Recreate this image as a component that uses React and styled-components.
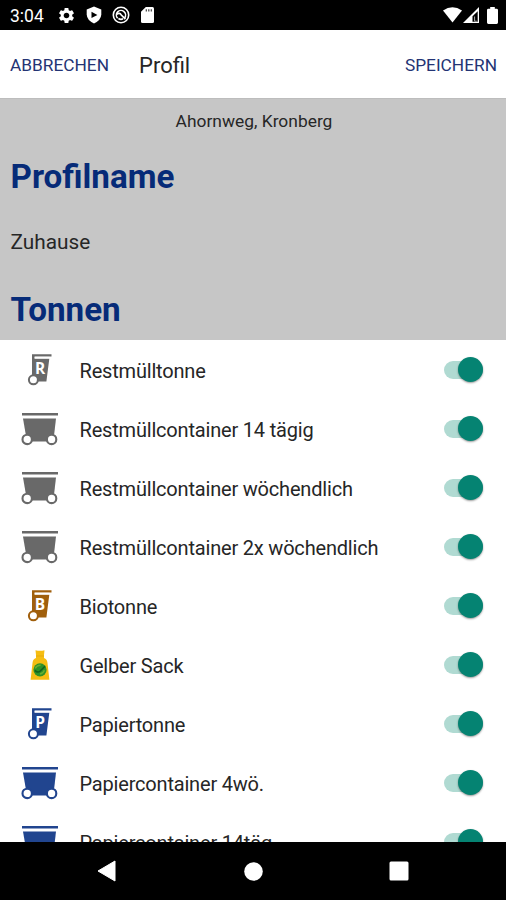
import React, { useState } from 'react';
import styled, { createGlobalStyle } from 'styled-components';
import { MdSettings } from 'react-icons/md';

const GREY = '#696969'
const BROWN = '#a05f0c'
const BLUE = '#21458f'

const BINS = [
  {name: 'Restmülltonne', kind: 'bin', letter: 'R', color: GREY},
  {name: 'Restmüllcontainer 14 tägig', kind: 'container', color: GREY},
  {name: 'Restmüllcontainer wöchendlich', kind: 'container', color: GREY},
  {name: 'Restmüllcontainer 2x wöchendlich', kind: 'container', color: GREY},
  {name: 'Biotonne', kind: 'bin', letter: 'B', color: BROWN},
  {name: 'Gelber Sack', kind: 'sack'},
  {name: 'Papiertonne', kind: 'bin', letter: 'P', color: BLUE},
  {name: 'Papiercontainer 4wö.', kind: 'container', color: BLUE},
  {name: 'Papiercontainer 14täg.', kind: 'container', color: BLUE},
]

const Bin = ({color, letter}) => (
  <svg width="26" height="34" viewBox="0 0 26 34">
    <path d="M5 1.2H24.5V3.4H7.6V5.8H22.3L19.4 28.4H5Z" fill={color} />
    <path d="M7.6 4.6H22.6" stroke="#fff" strokeWidth="1.6" opacity=".75" />
    <text x="13" y="20.8" textAnchor="middle" fontFamily="'Open Sans', sans-serif" fontWeight="700" fontSize="15.5" fill="#fff">{letter}</text>
    <circle cx="6.4" cy="26.8" r="4.5" fill="#fff" stroke={color} strokeWidth="2" />
  </svg>
)

const Container = ({color}) => (
  <svg width="38" height="34" viewBox="0 0 38 34">
    <path d="M1 2.2H37" stroke={color} strokeWidth="2.4" />
    <path d="M2 6.5H35L32.8 25.5L31 29.5H7L5.2 25Z" fill={color} />
    <circle cx="6.2" cy="27.4" r="4.7" fill="#fff" stroke={color} strokeWidth="2.1" />
    <circle cx="30.6" cy="27.4" r="4.7" fill="#fff" stroke={color} strokeWidth="2.1" />
  </svg>
)

const Sack = () => (
  <svg width="20" height="32" viewBox="0 0 20 32">
    <path d="M5.5 1.2Q10 2.2 14.5 1.2L14 6V9Q17.2 10 17.5 14L19.4 30.7H.6L2.5 14Q2.8 10 6 9V6Z" fill="#f6bd12" />
    <path d="M6 7H14" stroke="#e5ab0d" strokeWidth="1" />
    <circle cx="10" cy="20.8" r="6.6" fill="#2f9127" />
    <path d="M4.8 21.4Q8.2 24.8 11 21.2L15 17.2" fill="none" stroke="#12601d" strokeWidth="1.6" />
    <path d="M5.2 19.4Q6.8 16 10.6 16.2M10 25Q13.2 24.4 14.4 21.2" fill="none" stroke="#69ae31" strokeWidth="1.4" />
  </svg>
)

const BinIcon = ({kind, color, letter}) => {
  if(kind === 'bin') return <Bin color={color} letter={letter} />
  if(kind === 'container') return <Container color={color} />
  return <Sack />
}

const BinRow = ({bin}) => {
  const [active, setActive] = useState(true)

  return (
    <Row>
      <IconCell><BinIcon {...bin} /></IconCell>
      <Label>{bin.name}</Label>
      <Toggle
        role="switch"
        aria-checked={active}
        aria-label={bin.name}
        $on={active}
        onClick={() => setActive(!active)}
      >
        <Thumb $on={active} />
      </Toggle>
    </Row>
  )
}

const StatusBar = () => (
  <Status>
    <Clock>3:04</Clock>
    <Notifications>
      <MdSettings size={19} />
      <svg width="16" height="18" viewBox="0 0 16 18">
        <path d="M8 .6L15.3 3.4V8.5Q15 14.3 8 17.4Q1 14.3 .7 8.5V3.4Z" fill="#fff" />
        <path d="M5.5 5.8L11.4 8.9L5.5 12Z" fill="#000" />
      </svg>
      <svg width="18" height="18" viewBox="0 0 18 18" fill="none" stroke="#fff">
        <circle cx="9" cy="9" r="7.7" strokeWidth="1.6" />
        <path d="M5.6 12.2A4.6 4.6 0 1 1 12.6 11.9" strokeWidth="1.6" />
        <path d="M4.6 8.3Q7.4 6.2 9.3 9L13.4 13.2M6.4 12.6Q9 14 11 12.8" strokeWidth="1.7" />
      </svg>
      <svg width="13" height="16" viewBox="0 0 13 16">
        <path d="M4.8 0H11.5Q13 0 13 1.5V14.5Q13 16 11.5 16H1.5Q0 16 0 14.5V4.8Z" fill="#fff" />
        <path d="M5.3 2.2V4.4M7.8 2.2V4.4M10.3 2.2V4.4" stroke="#000" strokeWidth="1.2" opacity=".75" />
      </svg>
    </Notifications>
    <Signals>
      <svg width="19" height="16" viewBox="0 0 19 16">
        <path d="M0 3.5Q9.5 -3.2 19 3.5L9.5 15.6Z" fill="#fff" />
      </svg>
      <svg width="16" height="16" viewBox="0 0 16 16">
        <path d="M0 16L16 0V16Z" fill="#fff" />
        <path d="M9.5 14.7V9.2L14.7 4.2V14.7Z" fill="#000" />
        <path d="M11.6 9.5V14.2H13.8" stroke="#aaa" fill="none" />
      </svg>
      <svg width="11" height="17" viewBox="0 0 11 17">
        <path d="M3.2 0H7.8V1.8H9.6Q11 1.8 11 3.2V15.6Q11 17 9.6 17H1.4Q0 17 0 15.6V3.2Q0 1.8 1.4 1.8H3.2Z" fill="#fff" />
      </svg>
    </Signals>
  </Status>
)

const App = () => (
  <>
    <GlobalStyle />
    <Screen>
      <StatusBar />
      <Header>
        <HeaderButton>ABBRECHEN</HeaderButton>
        <Title>Profil</Title>
        <HeaderButton>SPEICHERN</HeaderButton>
      </Header>
      <Details>
        <Address>Ahornweg, Kronberg</Address>
        <Heading>Profilname</Heading>
        <ProfileName>Zuhause</ProfileName>
        <Heading>Tonnen</Heading>
      </Details>
      <List>
        {BINS.map(bin => <BinRow key={bin.name} bin={bin} />)}
      </List>
      <NavBar>
        <NavButton aria-label="Zurück">
          <svg width="19" height="22" viewBox="0 0 19 22"><path d="M18 1V21L1 11Z" fill="#fff" stroke="#fff" strokeLinejoin="round" /></svg>
        </NavButton>
        <NavButton aria-label="Start">
          <svg width="19" height="19" viewBox="0 0 19 19"><circle cx="9.5" cy="9.5" r="9.3" fill="#fff" /></svg>
        </NavButton>
        <NavButton aria-label="Übersicht">
          <svg width="20" height="20" viewBox="0 0 20 20"><rect x=".5" y=".5" width="19" height="19" rx="1.5" fill="#fff" /></svg>
        </NavButton>
      </NavBar>
    </Screen>
  </>
)

const GlobalStyle = createGlobalStyle`
  * { box-sizing: border-box; }
  body {
    margin: 0;
    font-family: Roboto, sans-serif;
    color: #262626;
  }
  button {
    border: 0;
    padding: 0;
    background: none;
    font: inherit;
    cursor: pointer;
  }
  svg { display: block; flex: none; }
`

const Screen = styled.div`
  display: flex;
  flex-direction: column;
  width: 506px;
  height: 900px;
  overflow: hidden;
  background: #fff;
`

const Status = styled.div`
  display: flex;
  align-items: center;
  flex: none;
  height: 30px;
  padding: 0 8px 0 10px;
  background: #000;
  color: #fff;
`

const Clock = styled.span`
  width: 46.5px;
  font-size: 17.5px;
  line-height: 30px;
  padding-top: 2px;
`

const Notifications = styled.div`
  display: flex;
  align-items: center;
  gap: 10px;

  svg:last-child { margin-left: 1px; }
`

const Signals = styled.div`
  display: flex;
  align-items: center;
  margin-left: auto;

  svg + svg { margin-left: 1px; }
  svg:last-child { margin-left: 8px; }
`

const Header = styled.header`
  display: flex;
  align-items: center;
  flex: none;
  height: 69px;
  padding: 1px 9px 0 10px;
  border-bottom: 1px solid #bdbdbd;
`

const HeaderButton = styled.button`
  color: #243474;
  font-size: 17.3px;
`

const Title = styled.h1`
  flex: 1;
  margin: 0 0 0 30px;
  padding-top: 2px;
  font-size: 22px;
  font-weight: 400;
`

const Details = styled.section`
  flex: none;
  height: 241px;
  padding: 10px 10.5px 0;
  background: #c6c6c6;
`

const Address = styled.p`
  margin: 0;
  padding-left: 2px;
  text-align: center;
  font-size: 17.4px;
  line-height: 25px;
`

const Heading = styled.h2`
  margin: 0;
  padding-top: 21px;
  color: #062b78;
  font-size: 33.2px;
  font-weight: 700;
  line-height: 44px;
`

const ProfileName = styled.p`
  margin: 0;
  padding-top: 27px;
  font-size: 20.8px;
  line-height: 32px;
  height: 68px;
`

const List = styled.div`
  flex: 1;
  min-height: 0;
  overflow: hidden;
`

const Row = styled.div`
  display: flex;
  align-items: center;
  height: 59.05px;
  padding-right: 23px;
`

const IconCell = styled.div`
  display: flex;
  justify-content: center;
  width: 80px;
`

const Label = styled.span`
  flex: 1;
  margin-left: -0.5px;
  padding-top: 2px;
  font-size: 20px;
  letter-spacing: -0.19px;
`

const Toggle = styled.button`
  display: flex;
  align-items: center;
  justify-content: ${props => props.$on ? 'flex-end' : 'flex-start'};
  width: 39px;
  height: 18px;
  border-radius: 9px;
  background: ${props => props.$on ? '#b0dad2' : '#b9b9b9'};
`

const Thumb = styled.span`
  flex: none;
  width: 25px;
  height: 25px;
  border-radius: 50%;
  background: ${props => props.$on ? '#058372' : '#f1f1f1'};
  box-shadow: 0 1px 2px rgba(0, 0, 0, 0.4);
`

const NavBar = styled.nav`
  display: flex;
  align-items: center;
  justify-content: space-between;
  flex: none;
  height: 58px;
  padding: 0 72px 0 71px;
  background: #000;
`

const NavButton = styled.button`
  display: flex;
  align-items: center;
  justify-content: center;
  width: 70px;
  height: 48px;

  &:nth-child(2) { padding-left: 2px; }
`

export default App;
